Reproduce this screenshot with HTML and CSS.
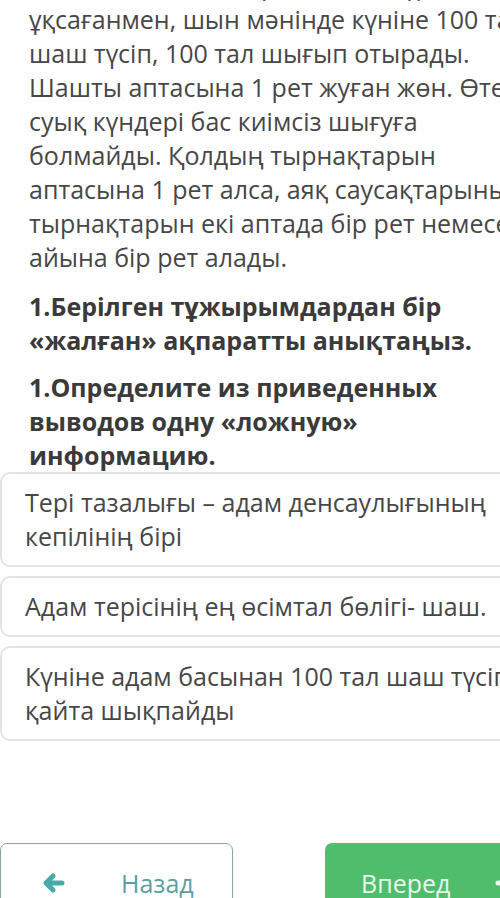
FILE: index.html
```html
<!DOCTYPE html>
<html lang="kk">
<head>
  <meta charset="UTF-8" />
  <meta name="viewport" content="width=device-width, initial-scale=1.0"/>
  <title>Тест</title>
  <link rel="stylesheet" href="styles.css">
</head>
<body>
  <main class="page">
    <p class="text">
      Адамның шашы, бір қалыпта тұрғандай
      ұқсағанмен, шын мәнінде күніне 100 тал шаш түсіп, 100 тал шығып отырады.
      Шашты аптасына 1 рет жуған жөн. Өте суық күндері бас киімсіз шығуға
      болмайды. Қолдың тырнақтарын аптасына 1 рет алса, аяқ саусақтарының
      тырнақтарын екі аптада бір рет немесе айына бір рет алады.
    </p>

    <h3 class="question">1.Берілген тұжырымдардан бір «жалған» ақпаратты анықтаңыз.</h3>
    <h3 class="question">1.Определите из приведенных выводов одну «ложную» информацию.</h3>

    <ul class="options">
      <li class="option">Тері тазалығы – адам денсаулығының кепілінің бірі</li>
      <li class="option">Адам терісінің ең өсімтал бөлігі- шаш.</li>
      <li class="option">Күніне адам басынан 100 тал шаш түсіп, қайта шықпайды</li>
    </ul>

    <nav class="pager">
      <button class="btn btn-back">
        <svg class="arrow" viewBox="0 0 24 24" width="24" height="24">
          <path d="M20 12H5M11 5l-7 7 7 7" fill="none" stroke="currentColor" stroke-width="5" stroke-linecap="round" stroke-linejoin="round"/>
        </svg>
        <span>Назад</span>
      </button>
      <button class="btn btn-next">
        <span>Вперед</span>
        <svg class="arrow" viewBox="0 0 24 24" width="24" height="24">
          <path d="M4 12h15M13 5l7 7-7 7" fill="none" stroke="currentColor" stroke-width="5" stroke-linecap="round" stroke-linejoin="round"/>
        </svg>
      </button>
    </nav>
  </main>
</body>
</html>
```

FILE: styles.css
```css
* {
  box-sizing: border-box;
}

body {
  margin: 0;
  background: #ffffff;
  font-family: 'Open Sans', 'Noto Sans', sans-serif;
  overflow: hidden;
}

/* page is scrolled a little, first line sits above the top edge */
.page {
  width: 600px;
  margin-top: -32px;
}

.text {
  margin: 0 0 15px;
  padding-left: 29px;
  width: 529px;
  font-size: 25px;
  line-height: 34px;
  color: #474747;
}

.question {
  margin: 0 0 13px;
  padding-left: 29px;
  width: 529px;
  font-size: 25px;
  font-weight: 700;
  line-height: 34px;
  color: #3a3a3a;
}

.question:last-of-type {
  margin-bottom: 0;
}

.options {
  list-style: none;
  margin: 0;
  padding: 0;
}

.option {
  width: 577px;
  margin-bottom: 9px;
  padding: 11px 20px 12px 23px;
  border: 2px solid #e4e4e4;
  border-radius: 10px;
  font-size: 25px;
  line-height: 34px;
  color: #474747;
}

.pager {
  display: flex;
  gap: 92px;
  margin-top: 102px;
}

.btn {
  display: flex;
  align-items: center;
  width: 233px;
  height: 80px;
  border-radius: 7px;
  font-family: inherit;
  font-size: 25px;
  cursor: pointer;
}

.btn-back {
  padding-left: 41px;
  gap: 55px;
  background: #ffffff;
  border: 1.5px solid #7eaaab;
  color: #5c9fa0;
}

.btn-back .arrow {
  color: #48a9a9;
}

.btn-next {
  padding-left: 36px;
  gap: 44px;
  background: #4fbd6b;
  border: none;
  color: #eaf8ed;
}
```
